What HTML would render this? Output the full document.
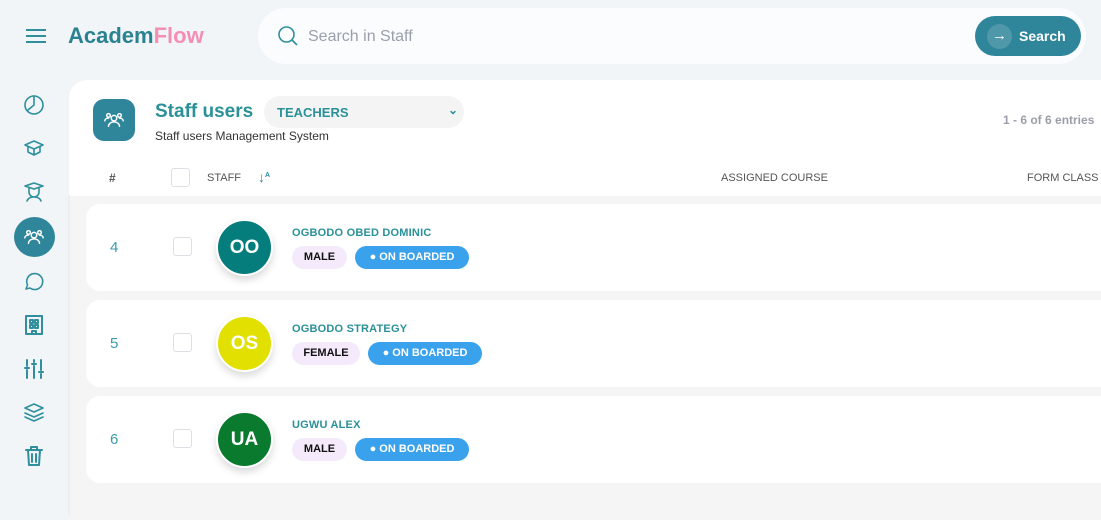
<!DOCTYPE html>
<html><head><style>
*{box-sizing:border-box;margin:0;padding:0}
body{width:1101px;height:510px;overflow:hidden;background:#f1f5f8;font-family:"Liberation Sans",sans-serif;position:relative}
.a{position:absolute}
.ic{position:absolute;left:22px;width:24px;height:24px}
.ic svg{width:24px;height:24px;fill:none;stroke:#2f8f9d;stroke-width:1.6;stroke-linecap:round;stroke-linejoin:round}
.row{position:absolute;left:86px;width:1030px;height:87px;background:#fff;border-radius:14px}
.num{position:absolute;left:24px;top:35px;color:#3a9bb0;font-size:15px}
.cb{position:absolute;left:87px;top:33px;width:19px;height:19px;border:1.5px solid #dcdfe3;border-radius:3px}
.av{position:absolute;left:130px;top:15px;width:57px;height:57px;border-radius:50%;border:2px solid #fff;box-shadow:0 4px 8px rgba(0,0,0,.15);color:#fff;font-size:19px;font-weight:bold;text-align:center;line-height:53px}
.nm{position:absolute;left:206px;top:23px;color:#2a9198;font-size:11px;font-weight:bold;letter-spacing:.2px}
.tg{position:absolute;top:42px;height:23px;border-radius:12px;font-size:11px;font-weight:bold;line-height:23px;text-align:center}
.g{left:206px;background:#f5eafb;color:#111}
.ob{background:#3aa1ec;color:#fff}
</style></head><body>
<div class="a" style="left:26px;top:29px;width:20px;height:14px;border-top:2px solid #2f8f9d;border-bottom:2px solid #2f8f9d"><div style="margin-top:4px;height:2px;background:#2f8f9d"></div></div>
<div class="a" style="left:68px;top:23px;font-size:22px;font-weight:bold;color:#2a8290">Academ<span style="color:#f48fb4">Flow</span></div>
<div class="a" style="left:258px;top:8px;width:828px;height:56px;background:#fafcfe;border-radius:28px"></div>
<svg class="a" style="left:277px;top:25px" width="22" height="22" viewBox="0 0 22 22" fill="none" stroke="#2f8f9d" stroke-width="1.6"><circle cx="9.5" cy="9.5" r="7.5"/><path d="M15 15l5 5"/></svg>
<div class="a" style="left:308px;top:28px;font-size:16px;color:#9aa0ab">Search in Staff</div>
<div class="a" style="left:975px;top:16px;width:106px;height:40px;background:#2f8599;border-radius:20px"></div>
<div class="a" style="left:987px;top:24px;width:25px;height:25px;border-radius:50%;background:#4f98aa;color:#fff;text-align:center;line-height:24px;font-size:15px">→</div>
<div class="a" style="left:1019px;top:28px;color:#fff;font-weight:bold;font-size:14px">Search</div>
<div class="a" style="left:69px;top:80px;width:1040px;height:440px;background:#f5f5f6;border-radius:18px 0 0 0;overflow:hidden"><div style="height:116px;background:#fff"></div></div>
<div class="a" style="left:68px;top:195px;width:2px;height:320px;background:#eceff2"></div>
<div class="a" style="left:93px;top:99px;width:42px;height:42px;border-radius:11px;background:#2f8599"></div>
<svg class="a" style="left:103px;top:109px" width="22" height="22" viewBox="0 0 24 24" fill="none" stroke="#fff" stroke-width="1.6" stroke-linecap="round"><circle cx="12" cy="10" r="3"/><path d="M6 19c0-3 3-5 6-5s6 2 6 5"/><circle cx="6" cy="7" r="2"/><circle cx="18" cy="7" r="2"/><path d="M2 13c0-2 2-3 4-3M22 13c0-2-2-3-4-3"/></svg>
<div class="a" style="left:155px;top:101px;font-size:19px;font-weight:bold;color:#2a9198">Staff users</div>
<div class="a" style="left:264px;top:96px;width:200px;height:32px;background:#f4f4f5;border-radius:16px"></div>
<div class="a" style="left:277px;top:105px;font-size:13px;font-weight:bold;color:#2a9198">TEACHERS</div>
<div class="a" style="left:448px;top:103px;font-size:12px;color:#2a9198;font-weight:bold">⌄</div>
<div class="a" style="left:155px;top:129px;font-size:12px;color:#333">Staff users Management System</div>
<div class="a" style="left:1003px;top:113px;font-size:12px;color:#9a9ea8;font-weight:bold">1 - 6 of 6 entries</div>
<div class="a" style="left:109px;top:171px;font-size:12px;color:#555;font-weight:bold">#</div>
<div class="a" style="left:171px;top:168px;width:19px;height:19px;border:1.5px solid #dcdfe3;border-radius:3px"></div>
<div class="a" style="left:207px;top:172px;font-size:11px;color:#555">STAFF</div>
<div class="a" style="left:258px;top:169px;font-size:14px;color:#2f8f9d;font-weight:bold">↓<span style="font-size:7px;position:relative;top:-5px">A</span></div>
<div class="a" style="left:721px;top:172px;font-size:11px;color:#555">ASSIGNED COURSE</div>
<div class="a" style="left:1027px;top:172px;font-size:11px;color:#555">FORM CLASS</div>

<div class="ic" style="top:93px"><svg viewBox="0 0 24 24"><circle cx="12" cy="12" r="9"/><path d="M12 3v9l-6 5"/></svg></div>
<div class="ic" style="top:136px"><svg viewBox="0 0 24 24"><path d="M3 9l9-4 9 4-9 4z"/><path d="M6 11v5l6 3 6-3v-5M12 13v6"/></svg></div>
<div class="ic" style="top:180px"><svg viewBox="0 0 24 24"><path d="M3 6l9-3 9 3-9 3z"/><path d="M7 8v4a5 5 0 0 0 10 0V8M5 21c1-3 4-4 7-4s6 1 7 4"/></svg></div>
<div class="a" style="left:14px;top:217px;width:41px;height:40px;border-radius:50%;background:#2f8599"></div>
<svg class="a" style="left:23px;top:226px" width="22" height="22" viewBox="0 0 24 24" fill="none" stroke="#fff" stroke-width="1.6" stroke-linecap="round"><circle cx="12" cy="10" r="3"/><path d="M6 19c0-3 3-5 6-5s6 2 6 5"/><circle cx="6" cy="7" r="2"/><circle cx="18" cy="7" r="2"/><path d="M2 13c0-2 2-3 4-3M22 13c0-2-2-3-4-3"/></svg>
<div class="ic" style="top:269px"><svg viewBox="0 0 24 24"><path d="M4 20l1.5-4A8 8 0 1 1 8 19z"/></svg></div>
<div class="ic" style="top:313px"><svg viewBox="0 0 24 24" style="stroke-width:2"><path d="M4 3h16v18H4zM8 7h3v3H8zM13 7h3v3h-3zM8 12h3v3H8zM13 12h3v3h-3zM10 21v-3h4v3"/></svg></div>
<div class="ic" style="top:357px"><svg viewBox="0 0 24 24" style="stroke-width:2"><path d="M5 3v6M5 13v8M12 3v2M12 9v12M19 3v10M19 17v4M3 11h4M10 7h4M17 15h4"/></svg></div>
<div class="ic" style="top:401px"><svg viewBox="0 0 24 24"><path d="M12 3l9 4-9 4-9-4z"/><path d="M3 12l9 4 9-4M3 16l9 4 9-4"/></svg></div>
<div class="ic" style="top:444px"><svg viewBox="0 0 24 24" style="stroke-width:2"><path d="M4 6h16M9 6V3h6v3M6 6l1 15h10l1-15M10 10v8M14 10v8"/></svg></div>

<div class="row" style="top:204px"><div class="num">4</div><div class="cb"></div><div class="av" style="background:#057d7d">OO</div><div class="nm">OGBODO OBED DOMINIC</div><div class="tg g" style="width:55px">MALE</div><div class="tg ob" style="left:269px;width:114px">● ON BOARDED</div></div>
<div class="row" style="top:300px"><div class="num">5</div><div class="cb"></div><div class="av" style="background:#e2e000">OS</div><div class="nm">OGBODO STRATEGY</div><div class="tg g" style="width:68px">FEMALE</div><div class="tg ob" style="left:282px;width:114px">● ON BOARDED</div></div>
<div class="row" style="top:396px"><div class="num">6</div><div class="cb"></div><div class="av" style="background:#0a7a2e">UA</div><div class="nm">UGWU ALEX</div><div class="tg g" style="width:55px">MALE</div><div class="tg ob" style="left:269px;width:114px">● ON BOARDED</div></div>
</body></html>
